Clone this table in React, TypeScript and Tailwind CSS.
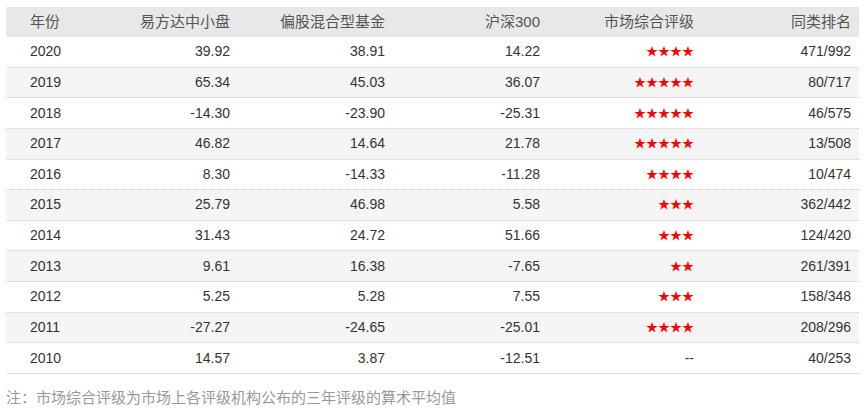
const rows = [
  ["2020", "39.92", "38.91", "14.22", 4, "471/992"],
  ["2019", "65.34", "45.03", "36.07", 5, "80/717"],
  ["2018", "-14.30", "-23.90", "-25.31", 5, "46/575"],
  ["2017", "46.82", "14.64", "21.78", 5, "13/508"],
  ["2016", "8.30", "-14.33", "-11.28", 4, "10/474"],
  ["2015", "25.79", "46.98", "5.58", 3, "362/442"],
  ["2014", "31.43", "24.72", "51.66", 3, "124/420"],
  ["2013", "9.61", "16.38", "-7.65", 2, "261/391"],
  ["2012", "5.25", "5.28", "7.55", 3, "158/348"],
  ["2011", "-27.27", "-24.65", "-25.01", 4, "208/296"],
  ["2010", "14.57", "3.87", "-12.51", 0, "40/253"],
] as const;

const cols = "grid grid-cols-[77px_155px_155px_155px_154px_157px] items-center";

export default function App() {
  return (
    <div
      className="w-[865px] h-[414px] bg-white px-[6px] pt-[7px] text-[14px] text-[#333]"
      style={{ fontFamily: '"Liberation Sans", "Noto Sans CJK SC", "DejaVu Sans", sans-serif' }}
    >
      <div className={`${cols} h-[30px] bg-[#e8e8e8] text-[15px] text-[#555]`}>
        <div className="pl-[24px]">年份</div>
        <div className="text-right pr-[8px]">易方达中小盘</div>
        <div className="text-right pr-[8px]">偏股混合型基金</div>
        <div className="text-right pr-[8px]">沪深300</div>
        <div className="text-right pr-[8px]">市场综合评级</div>
        <div className="text-right pr-[8px]">同类排名</div>
      </div>
      {rows.map((r, i) => (
        <div
          key={r[0]}
          className={`${cols} h-[30.64px] border-b ${
            i === rows.length - 1 ? "border-solid border-[#dcdcdc]" : "border-dotted border-[#cfcfcf]"
          } ${i % 2 === 1 ? "bg-[#f5f5f5]" : "bg-white"}`}
        >
          <div className="pl-[24px]">{r[0]}</div>
          <div className="text-right pr-[8px]">{r[1]}</div>
          <div className="text-right pr-[8px]">{r[2]}</div>
          <div className="text-right pr-[8px]">{r[3]}</div>
          <div className="text-right pr-[8px]">
            {r[4] > 0 ? (
              <span className="text-[12px] text-[#ff0000]">{"★".repeat(r[4])}</span>
            ) : (
              "--"
            )}
          </div>
          <div className="text-right pr-[8px]">{r[5]}</div>
        </div>
      ))}
      <div className="mt-[13px] text-[15px] text-[#999]">注：市场综合评级为市场上各评级机构公布的三年评级的算术平均值</div>
    </div>
  );
}
